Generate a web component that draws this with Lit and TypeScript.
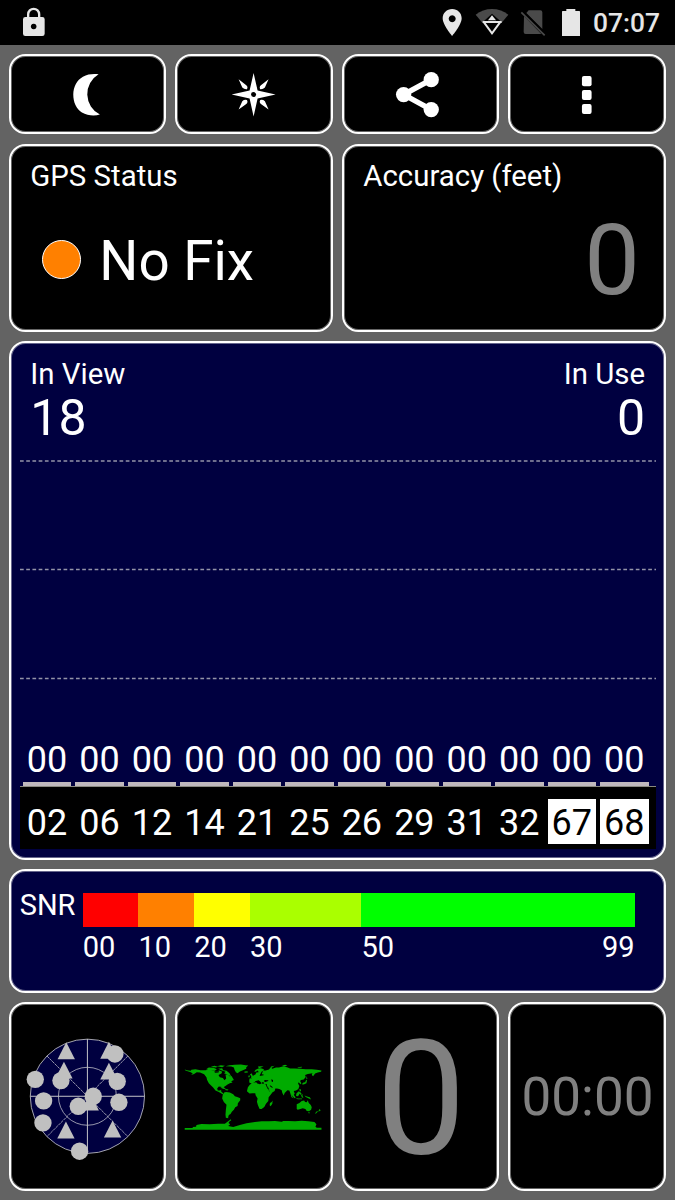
import { LitElement, html, svg, css } from "lit";
import { customElement } from "lit/decorators.js";
import { classMap } from "lit/directives/class-map.js";

const SATS = ["02", "06", "12", "14", "21", "25", "26", "29", "31", "32", "67", "68"];
const SNR = [
  { label: "00", color: "#ff0000", span: 10 },
  { label: "10", color: "#ff8000", span: 10 },
  { label: "20", color: "#ffff00", span: 10 },
  { label: "30", color: "#aaff00", span: 20 },
  { label: "50", color: "#00ff00", span: 49 },
];
const DOTS = [[345, 163], [106, 239], [183, 243], [352, 245], [131, 304], [129, 370], [357, 308], [235, 320], [280, 290], [239, 455]];
const TRIANGLES = [[199, 179], [327, 177], [192, 237], [327, 240], [271, 333], [198, 417], [338, 414]];

@customElement("app-root")
export class AppRoot extends LitElement {
  static styles = css`
    :host {
      display: flex;
      flex-direction: column;
      width: 675px;
      height: 1200px;
      overflow: hidden;
      background: #636363;
      color: #fff;
      font-family: Roboto, sans-serif;
      font-size: 29.4px;
    }
    * { box-sizing: border-box; }
    svg { display: block; flex: none; }
    .status {
      display: flex;
      height: 45px;
      flex: none;
      background: #000;
      padding-left: 20px;
      padding-right: 15.3px;
      fill: #e6e6e6;
    }
    .status svg { height: 45px; }
    .lock { width: 28px; margin-right: auto; }
    .pin { width: 20px; }
    .wifi { width: 34px; margin-left: 13px; }
    .sim { width: 26px; margin-left: 11px; }
    .battery { width: 20px; margin-left: 15px; }
    .clock {
      margin-left: 12px;
      width: 66.7px;
      white-space: nowrap;
      font-size: 26.4px;
      font-weight: 500;
      line-height: 47px;
      color: #e6e6e6;
    }
    .page {
      display: grid;
      padding: 8.6px 9.4px 9px 9px;
      height: 1155px;
      grid-template-columns: repeat(4, minmax(0, 1fr));
      grid-template-rows: 80.9px 188.3px 518.7px 123.3px 188.9px;
      row-gap: 9.3px;
      column-gap: 9.3px;
    }
    .card {
      border: 2px solid #fff;
      border-radius: 16.5px;
      background: #000;
      box-shadow: inset 0 0 0 1px rgba(255, 255, 255, 0.4);
      overflow: hidden;
      min-width: 0;
    }
    .half { grid-column: span 2; }
    .full { grid-column: span 4; background: #000040; }
    .fill { width: 100%; height: 100%; }
    .title { line-height: 34px; padding: 13.5px 19.3px 0; white-space: nowrap; }
    .fix { display: flex; align-items: center; padding: 36px 0 0 31px; font-size: 54.8px; line-height: 64px; }
    .led { width: 39px; height: 39px; border-radius: 50%; border: 1.5px solid #fff; background: #ff8000; margin: 0 18.3px 4px 0; }
    .accuracy { text-align: right; font-size: 99px; line-height: 100px; padding: 17px 23.8px 0 0; color: #808080; }
    .heads { display: flex; justify-content: space-between; padding: 13.8px 18.5px 0 19.3px; line-height: 34px; }
    .heads > :last-child { text-align: right; }
    .count { font-size: 50px; line-height: 54px; }
    .chart { padding: 15px 8.6px 0; }
    .grid { width: 636px; height: 278px; }
    .labels { display: grid; grid-template-columns: repeat(12, 48.4px); column-gap: 4.1px; padding-left: 3.2px; text-align: center; font-size: 36px; }
    .value { line-height: 44px; height: 43.8px; }
    .bar { height: 4.4px; background: #c0b9bd; }
    .ids { height: 63px; width: 636px; background: #000; border-top: 1px solid #8a8a80; padding-top: 11.3px; }
    .id { height: 45px; line-height: 48.6px; }
    .lit { background: #fff; color: #000; }
    .snr { display: flex; padding: 21.6px 29px 0 8.7px; }
    .name { width: 63px; line-height: 24px; font-size: 29px; }
    .scale { flex: 1; display: flex; font-size: 29px; }
    .seg { height: 34px; }
    .tick { display: flex; justify-content: space-between; line-height: 40px; }
    .big, .timer { display: flex; align-items: center; justify-content: center; color: #808080; white-space: nowrap; }
    .big { font-size: 160px; line-height: 176px; padding: 5px 0 0 1px; }
    .timer { font-size: 53px; line-height: 60px; padding: 1px 0 0 1px; }
  `;

  private statusBar() {
    return html`<div class="status">
      <svg class="lock" viewBox="60 0 84 135">
        <path fill-rule="evenodd" d="M81 51V43a20 20 0 0 1 40 0v8h6q7 0 7 7v43q0 7-7 7H76q-7 0-7-7V58q0-7 7-7zM88 51h26v-8a13 13 0 0 0-26 0zM101 71a8.5 8.5 0 1 0 .1 0z"/>
      </svg>
      <svg class="pin" viewBox="319 0 60 135">
        <path fill-rule="evenodd" d="M349.500 27c16 0 28.500 12 28.500 28 0 20-28.500 53-28.500 53s-28.500-33-28.500-53c0-16 12.500-28 28.500-28zM349.500 46a10.500 10.500 0 1 0 .1 0z"/>
      </svg>
      <svg class="wifi" viewBox="420 0 102 135">
        <path fill="#4a4a4a" d="M422 44Q443 27 471 27T520 44L500 68H442z"/>
        <path fill="#000" d="M471 41L446 64H497z"/>
        <path fill="none" stroke="#e6e6e6" stroke-width="6" d="M443 66H500M447 67L471 100L495 67"/>
        <path d="M471 46L459 61H483z"/>
      </svg>
      <svg class="sim" viewBox="554 0 78 135">
        <path fill="#4a4a4a" d="M580 31H615q6 0 6 6V87L573 39zM566 48L618 102H571q-6 0-6-6z"/>
        <path fill="none" stroke="#000" stroke-width="5" d="M565 37L632 103"/>
        <path fill="none" stroke="#4a4a4a" stroke-width="5" d="M558 37L628 106"/>
      </svg>
      <svg class="battery" viewBox="678 0 60 135"><path d="M694 27H721V33H733q2 0 2 2V108H681V35q0-2 2-2H694z"/></svg>
      <div class="clock">07:07</div>
    </div>`;
  }

  private radar() {
    return html`<svg class="fill" viewBox="34 13 458 555">
      <circle cx="262.500" cy="290" r="171.500" fill="#000040" stroke="#c4c4c8" stroke-width="2.500"/>
      <circle cx="262.500" cy="290" r="87" fill="none" stroke="#b4b4c0" stroke-width="2.500"/>
      <path d="M91 290H434M262.500 118V461" stroke="#c4c4c8" stroke-width="3"/>
      <path d="M141 169L384 411M384 169L141 411" stroke="#b4b4c0" stroke-width="2.500" stroke-dasharray="9 2"/>
      <g fill="#c0c0c0">
        ${DOTS.map(([x, y]) => svg`<circle cx=${x} cy=${y} r="26"/>`)}
        ${TRIANGLES.map(([x, y]) => svg`<path d=${`M${x} ${y - 51}L${x + 26} ${y}H${x - 26}z`}/>`)}
      </g>
    </svg>`;
  }

  private world() {
    return html`<svg class="fill" viewBox="-13 -161 458 553" fill="#00ab00">
      <path d="M10 35L17 37L28 39L30 36L42 34L57 37L72 37L85 35L93 38L105 40L115 38L122 42L120 47L111 51L115 58L124 60L129 67L134 62L132 50L139 50L144 55L150 54L154 61L157 66L149 70L153 74L145 76L138 80L132 84L127 87L125 93L121 87L112 86L107 92L109 98L116 98L119 95L119 101L124 105L127 110L122 108L112 102L102 98L95 89L88 82L82 76L77 66L75 58L68 49L56 44L46 43L38 48L29 51L34 47L28 43L12 38z"/>
      <path d="M74 34l8-5 14 1 10 4-6 5-15-1zM88 27l11-3 10 3-6 2zM107 25l11-3 12 2-8 4zM110 33l12-2 3 6 10 2 9 7 5 9-7-2-8-5-6-1 4-5-11-4z"/>
      <path d="M132 25L144 22L160 21L178 20L192 22L200 23L194 28L194 33L184 37L175 41L168 46L163 43L159 36L157 29L149 26z"/>
      <path d="M189 41l8-1 3 3-7 2-5-1zM117 88l9 0 7 4-5 1-9-3zM132 93l9 2-3 3-7-2z"/>
      <path d="M124 110l5-7 5-1 11 2 10 5 5 6 9 3 7 3 0 6-7 9-1 8-7 4-4 7-6 6-4 7-5 3-2 6 0 4-7-2-1-9 1-14 2-16-8-8-5-10 1-7z"/>
      <path d="M199 88l5-7 7-6 13-2 3 4 8 2 4-2 13 2 5 12 7 10 9-1-3 7-9 11-1 11-7 8-5 10-8 6-6 0-5-11-3-11 2-9-6-10-1-6-9 0-8 1-8-7z"/>
      <path d="M270 132l3-4-1 9-5 8-3-3 1-7z"/>
      <path d="M203 74L203 67L204 62L211 61L209 56L216 53L222 49L224 44L231 43L229 38L222 42L218 41L222 36L230 32L238 31L247 34L245 38L252 38L262 35L266 30L272 33L283 29L292 29L305 25L318 29L325 32L338 32L355 33L372 34L390 34L405 36L419 38L418 42L408 44L400 47L394 55L390 51L392 46L378 48L370 51L372 57L366 65L358 66L355 69L359 76L356 79L351 73L349 77L353 84L350 93L343 98L336 99L339 107L335 112L331 108L330 112L335 122L329 117L326 107L323 98L317 97L309 105L306 113L302 105L300 97L293 93L286 92L281 92L279 99L268 106L262 97L257 88L255 78L246 78L247 74L242 72L241 78L235 72L229 68L222 69L218 74L210 77z"/>
      <path d="M205 50l5-4 4 8 2 5-8 1 2-4zM201 53l4 0-1 5-4 0zM229 26l9-1 8 1-8 3-6 3zM265 33l3-7 11-2-9 6 0 5zM301 24l9-3 7 2-8 3zM347 28l14-1-2 3-10 0z"/>
      <path d="M360 79l5-5 5-1 3-7 3 1-2 9-8 4zM374 54l3 8-3 3zM353 93l4 1 1 6-4 0zM354 101l6 7-3 3-4-6zM328 105l6 3 8 11-4 2-7-8zM344 107l7-7 4 5-6 10-6-1zM341 120l9 2 11 0 0 2-13 0zM358 111l6-2-2 4 3 7-5-2zM368 113l8 3 8 2 4 7-7-3-9-5z"/>
      <path d="M345 139L353 135L360 129L367 128L370 132L375 133L378 127L381 135L387 141L390 148L388 155L382 160L375 159L371 153L363 151L356 153L348 155L345 153zM379 163l5 0-2 4zM412 153l5 4-7 4zM409 160l-7 7-2-1 5-6z"/>
      <path d="M10 210L34 210L34 207L44 206L45 201L60 198L85 199L110 197L130 197L137 192L148 184L149 187L143 191L141 195L146 199L140 204L155 207L175 201L195 196L220 192L240 190L262 190L280 189L300 191L305 189L320 189L340 190L360 188L380 190L398 192L404 199L401 206L405 209L419 209V215H10z"/>
      <path fill="#000" d="M229 66l5 3 6 6-2 1-9-7zM249 66l12 1-3 3-7 2-4-2zM269 64l5 2 0 6-4-1zM254 82l7 8 2 5-5-5zM264 81l7 5 3 4-7-3zM98 42l3-2 12 0-2 4-10 1zM236 49l5-9 3 0-4 9 6 1 0 2-12 2z"/>
    </svg>`;
  }

  render() {
    return html`
      ${this.statusBar()}
      <div class="page">
        <div class="card"><svg class="fill" viewBox="34 167 458 231"><path fill="#fff" d="M296 222A69 69 0 0 0 300 343C285 348 263 347 246 337C229 327 220 306 220 283C220 259 231 239 249 229C264 221 281 220 296 222z"/></svg></div>
        <div class="card"><svg class="fill" viewBox="532 167 458 231">
          <path fill="#fff" d="M761 218L773 271L827 283L773 295L761 349L749 295L695 283L749 271z"/>
          <circle cx="761" cy="283" r="7.500" fill="#000"/>
          <path fill="#fff" d="M806 237L795 262Q789 268 781 267Q777 260 783 255zM716 237L727 262Q733 268 741 267Q745 260 739 255zM716 328L727 303Q733 297 741 299Q745 306 739 311zM806 328L795 303Q789 297 781 299Q777 306 783 311z"/>
        </svg></div>
        <div class="card"><svg class="fill" viewBox="28 167 458 231"><g fill="#fff"><circle cx="206" cy="283" r="23"/><circle cx="289" cy="238" r="23"/><circle cx="289" cy="328" r="23"/><path d="M289 238L206 283L289 328" fill="none" stroke="#fff" stroke-width="16"/></g></svg></div>
        <div class="card"><svg class="fill" viewBox="526 167 458 231"><g fill="#fff"><rect x="741" y="227" width="29" height="31" rx="6"/><rect x="741" y="269" width="29" height="30" rx="6"/><rect x="741" y="311" width="29" height="30" rx="6"/></g></svg></div>

        <div class="card half">
          <div class="title">GPS Status</div>
          <div class="fix"><div class="led"></div>No Fix</div>
        </div>
        <div class="card half">
          <div class="title">Accuracy (feet)</div>
          <div class="accuracy">0</div>
        </div>

        <div class="card full">
          <div class="heads">
            <div><div>In View</div><div class="count">18</div></div>
            <div><div>In Use</div><div class="count">0</div></div>
          </div>
          <div class="chart">
            <svg class="grid" viewBox="0 0 636 278"><path d="M0 1H636M0 109.500H636M0 218.500H636" stroke="#9494a8" stroke-width="1.300" stroke-dasharray="3.700 2.520" fill="none"/></svg>
            <div class="labels">${SATS.map(() => html`<div><div class="value">00</div><div class="bar"></div></div>`)}</div>
            <div class="labels ids">${SATS.map((s) => html`<div class=${classMap({ id: true, lit: Number(s) > 60 })}>${s}</div>`)}</div>
          </div>
        </div>

        <div class="card full snr">
          <div class="name">SNR</div>
          <div class="scale">
            ${SNR.map((s, i) => html`<div style="width:${(s.span / 99) * 100}%">
              <div class="seg" style="background:${s.color}"></div>
              <div class="tick"><span>${s.label}</span>${i === SNR.length - 1 ? html`<span>99</span>` : ""}</div>
            </div>`)}
          </div>
        </div>

        <div class="card">${this.radar()}</div>
        <div class="card">${this.world()}</div>
        <div class="card big">0</div>
        <div class="card timer">00:00</div>
      </div>
    `;
  }
}
